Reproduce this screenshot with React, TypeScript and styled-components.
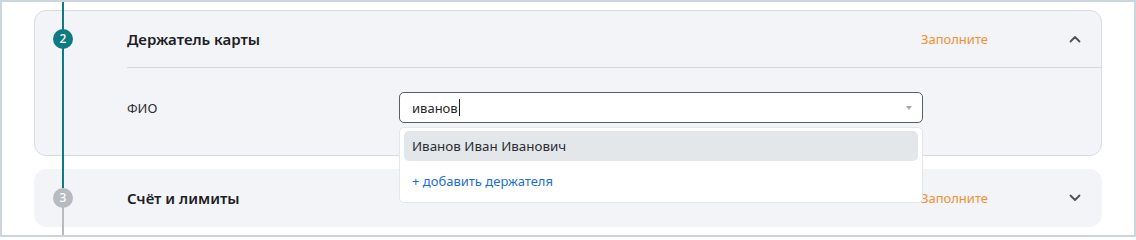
import React from "react";
import styled, { createGlobalStyle } from "styled-components";

const Global = createGlobalStyle`
  html, body { margin: 0; padding: 0; background: #ffffff; }
  * { box-sizing: border-box; }
  body { font-family: "Noto Sans", "Open Sans", Arial, sans-serif; }
`;

const Frame = styled.div`
  position: relative;
  width: 1136px;
  height: 237px;
  border: 2px solid #ccd5dd;
  background: #ffffff;
  padding: 8px 32px 0 32px;
  display: flex;
  flex-direction: column;
  gap: 13px;
  overflow: hidden;
`;

const Track = styled.div<{ $top: number; $height: number; $color: string }>`
  position: absolute;
  left: 60px;
  width: 2px;
  top: ${(p) => p.$top}px;
  height: ${(p) => p.$height}px;
  background: ${(p) => p.$color};
  z-index: 1;
`;

const Card = styled.section<{ $bordered?: boolean }>`
  position: relative;
  display: flex;
  background: #f3f4f8;
  border: 1px solid ${(p) => (p.$bordered ? "#d7dce2" : "#f3f4f8")};
  border-radius: 12px;
`;

const StepCol = styled.div`
  width: 92px;
  flex: none;
  padding: 18px 0 0 18px;
`;

const StepDot = styled.div<{ $active?: boolean }>`
  position: relative;
  z-index: 2;
  width: 20px;
  height: 20px;
  border-radius: 50%;
  background: ${(p) => (p.$active ? "#0e7a82" : "#b7bbc1")};
  color: #ffffff;
  font-size: 12px;
  font-weight: 500;
  display: flex;
  align-items: center;
  justify-content: center;
  line-height: 1;
`;

const Content = styled.div`
  flex: 1;
  display: flex;
  flex-direction: column;
`;

const Header = styled.div`
  height: 56px;
  display: flex;
  align-items: center;
`;

const Title = styled.h3`
  margin: 0;
  flex: 1;
  font-size: 15px;
  font-weight: 600;
  color: #1d2024;
  letter-spacing: 0;
`;

const Status = styled.span`
  font-size: 13px;
  color: #f2922f;
  margin-right: 75px;
`;

const ChevronBox = styled.div`
  width: 24px;
  height: 24px;
  margin-right: 14px;
  display: flex;
  align-items: center;
  justify-content: center;
  color: #4d5258;
`;

const Divider = styled.div`
  height: 1px;
  background: #d5dae0;
`;

const FormRow = styled.div`
  display: flex;
  align-items: center;
  padding: 24px 0 32px;
`;

const Label = styled.label`
  width: 272px;
  flex: none;
  font-size: 13px;
  color: #2a2e33;
`;

const Field = styled.div`
  position: relative;
  width: 524px;
`;

const InputBox = styled.div`
  height: 31px;
  border: 1px solid #5b5f65;
  border-radius: 5px;
  background: #ffffff;
  display: flex;
  align-items: center;
  padding: 0 12px;
  font-size: 13px;
  color: #24282c;
`;

const InputText = styled.span`
  flex: 1;
  display: flex;
  align-items: center;
`;

const Caret = styled.span`
  display: inline-block;
  width: 1px;
  height: 17px;
  background: #1d2024;
  margin-left: 1px;
`;

const Arrow = styled.span`
  width: 0;
  height: 0;
  border-left: 3px solid transparent;
  border-right: 3px solid transparent;
  border-top: 4px solid #a5abb2;
  margin-right: -2px;
`;

const Menu = styled.div`
  position: absolute;
  z-index: 5;
  top: 35px;
  left: 0;
  width: 524px;
  background: #ffffff;
  border: 1px solid #e3e6ea;
  border-radius: 5px;
  padding: 3px 4px 6px;
  display: flex;
  flex-direction: column;
  gap: 5px;
`;

const Option = styled.div<{ $highlight?: boolean; $action?: boolean }>`
  height: 30px;
  border-radius: 5px;
  padding: 0 8px;
  display: flex;
  align-items: center;
  font-size: ${(p) => (p.$action ? "13px" : "13.4px")};
  background: ${(p) => (p.$highlight ? "#e4e7ea" : "transparent")};
  color: ${(p) => (p.$action ? "#1c6fd3" : "#2a2e33")};
`;

const Chevron = ({ up }: { up?: boolean }) => (
  <svg width="12" height="8" viewBox="0 0 12 8" fill="none">
    <path
      d={up ? "M1.5 6.5 L6 2 L10.5 6.5" : "M1.5 1.5 L6 6 L10.5 1.5"}
      stroke="currentColor"
      strokeWidth="1.8"
      strokeLinecap="round"
      strokeLinejoin="round"
    />
  </svg>
);

export default function App() {
  return (
    <>
      <Global />
      <Frame>
        <Track $top={0} $height={186} $color="#0e7a82" />
        <Track $top={196} $height={45} $color="#b7bbc1" />
        <Card $bordered>
          <StepCol>
            <StepDot $active>2</StepDot>
          </StepCol>
          <Content>
            <Header>
              <Title>Держатель карты</Title>
              <Status>Заполните</Status>
              <ChevronBox>
                <Chevron up />
              </ChevronBox>
            </Header>
            <Divider />
            <FormRow>
              <Label>ФИО</Label>
              <Field>
                <InputBox>
                  <InputText>
                    иванов
                    <Caret />
                  </InputText>
                  <Arrow />
                </InputBox>
                <Menu>
                  <Option $highlight>Иванов Иван Иванович</Option>
                  <Option $action>+ добавить держателя</Option>
                </Menu>
              </Field>
            </FormRow>
          </Content>
        </Card>
        <Card>
          <StepCol>
            <StepDot>3</StepDot>
          </StepCol>
          <Content>
            <Header>
              <Title>Счёт и лимиты</Title>
              <Status>Заполните</Status>
              <ChevronBox>
                <Chevron />
              </ChevronBox>
            </Header>
          </Content>
        </Card>
      </Frame>
    </>
  );
}
